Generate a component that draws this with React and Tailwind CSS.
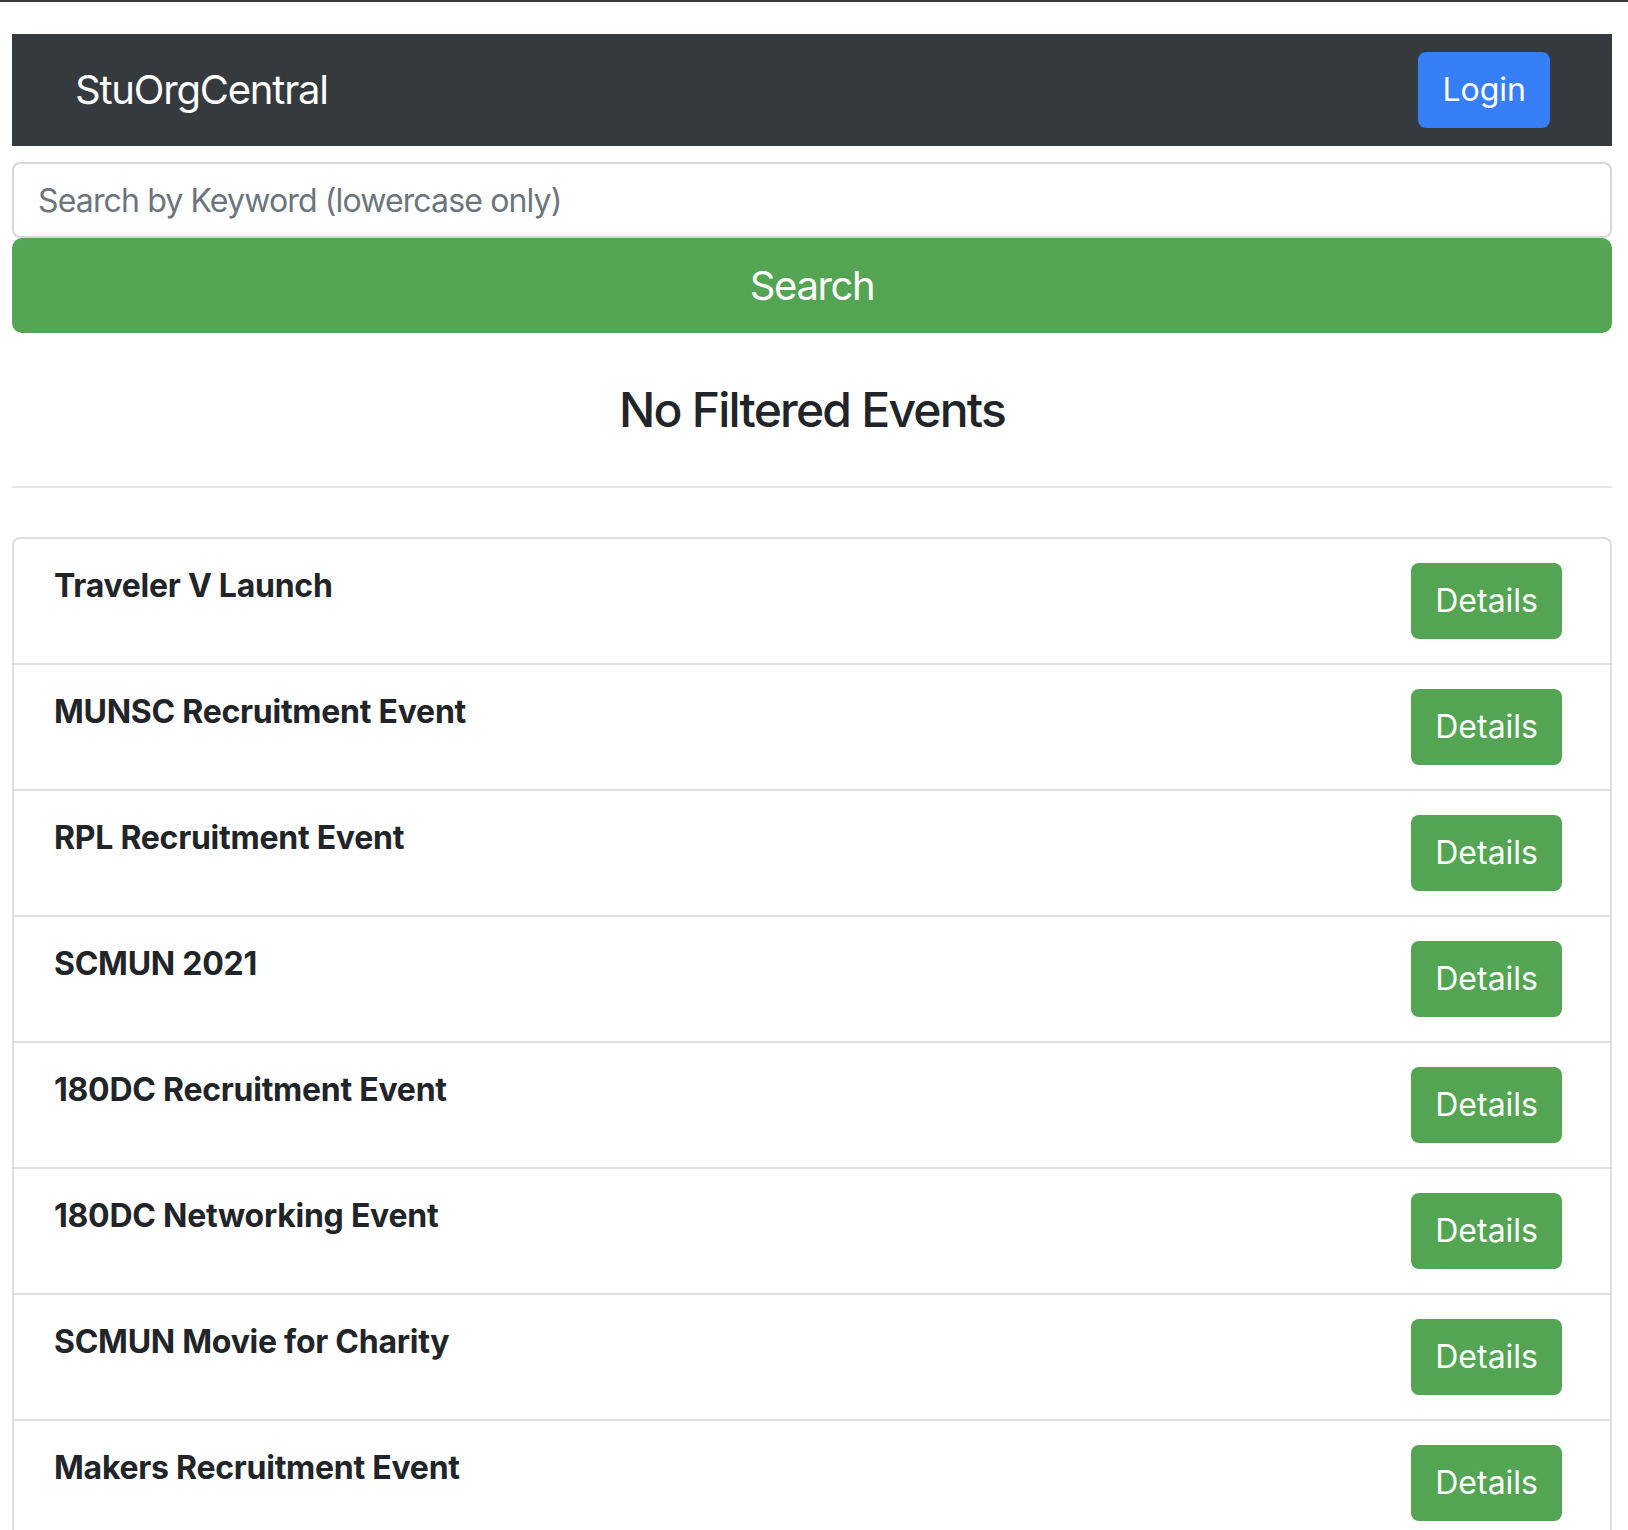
import React from "react";

const events = [
    "Traveler V Launch",
    "MUNSC Recruitment Event",
    "RPL Recruitment Event",
    "SCMUN 2021",
    "180DC Recruitment Event",
    "180DC Networking Event",
    "SCMUN Movie for Charity",
    "Makers Recruitment Event",
];

export default function App() {
    return (
        <div
            className="min-h-screen bg-white border-t-2 border-[#3a3a3a] pt-8 pl-3 pr-4 text-[#212529]"
            style={{ fontFamily: "Inter, 'Liberation Sans', sans-serif" }}
        >
            {/* Navbar */}
            <nav className="h-[112px] bg-[#353a3f] flex items-center justify-between pl-[63px] pr-[62px]">
                <span className="text-white text-[40px] leading-none tracking-[-0.03em]">
                    StuOrgCentral
                </span>
                <button className="h-[76px] px-6 rounded-lg bg-[#367ef5] text-white text-[32px]">
                    Login
                </button>
            </nav>

            {/* Search */}
            <div className="mt-4">
                <input
                    type="text"
                    placeholder="Search by Keyword (lowercase only)"
                    className="block w-full h-[76px] px-6 border-2 border-[#d3d6da] rounded-lg text-[32px] tracking-[-0.027em] placeholder:text-[#6c757d] outline-none"
                />
                <button className="block w-full h-[95px] rounded-[10px] bg-[#53a553] text-white text-[40px] tracking-[-0.035em]">
                    Search
                </button>
            </div>

            <h4 className="mt-12 text-center text-[48px] font-medium leading-[1.2] tracking-[-0.037em]">
                No Filtered Events
            </h4>

            <hr className="mt-[47px] border-t-2 border-[#e6e6e6]" />

            {/* Events list */}
            <ul className="mt-[49px] border-2 border-[#dfdfdf] rounded-lg">
                {events.map((name, index) => (
                    <li
                        key={name}
                        className={`flex justify-between items-start pl-10 pr-12 py-6 ${
                            index > 0 ? "border-t-2 border-[#dfdfdf]" : ""
                        }`}
                    >
                        <h6 className="mt-1 text-[32px] font-bold leading-[1.2] tracking-[-0.008em]">
                            {name}
                        </h6>
                        <button className="h-[76px] px-6 rounded-lg bg-[#53a553] text-white text-[32px]">
                            Details
                        </button>
                    </li>
                ))}
            </ul>
        </div>
    );
}
